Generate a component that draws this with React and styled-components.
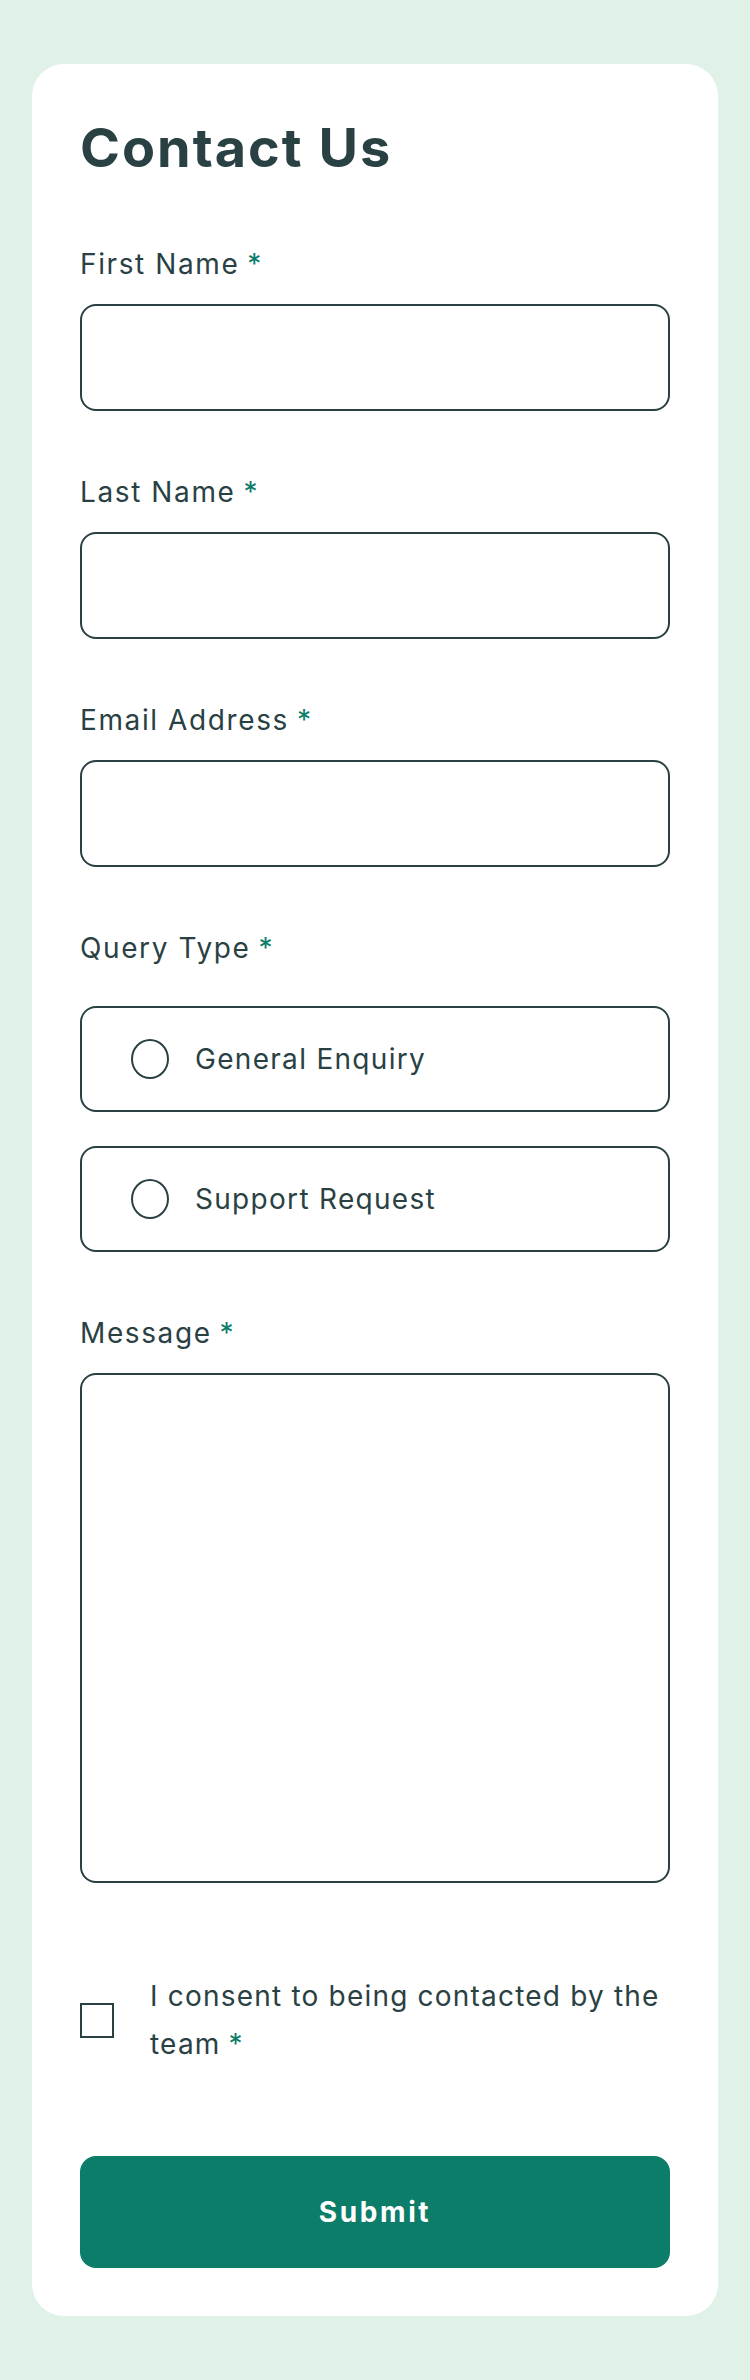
import { createGlobalStyle, styled } from 'styled-components';

const GlobalStyle = createGlobalStyle`
    html, body {
        margin: 0;
        padding: 0;
        background: #e0f1e8;
    }
    body {
        font-family: Inter, "Noto Sans", sans-serif;
        color: #2a4144;
    }
    * {
        box-sizing: border-box;
    }
`

const Page = styled.main`
    padding: 64px 32px;
`

const Card = styled.form`
    width: 686px;
    background: #ffffff;
    border-radius: 32px;
    padding: 48px;
    display: flex;
    flex-direction: column;
`

const Title = styled.h1`
    margin: 0 0 56px;
    font-size: 54px;
    line-height: 72px;
    font-weight: 700;
    letter-spacing: 2px;
`

const Fields = styled.div`
    display: flex;
    flex-direction: column;
    gap: 57px;
`

const Field = styled.div`
    display: flex;
    flex-direction: column;
    gap: ${(p) => p.$gap || 16}px;
`

const Label = styled.label`
    font-size: 28px;
    line-height: 48px;
    font-weight: 400;
    letter-spacing: 1.6px;
`

const Star = styled.span`
    color: #0c7d69;
    margin-left: 8px;
`

const Input = styled.input`
    display: block;
    width: 100%;
    height: 107px;
    border: 2px solid #2a4144;
    border-radius: 16px;
    background: #fff;
    font: inherit;
    padding: 0 24px;
    outline: none;
`

const TextArea = styled.textarea`
    display: block;
    width: 100%;
    height: 510px;
    border: 2px solid #2a4144;
    border-radius: 16px;
    background: #fff;
    font: inherit;
    padding: 24px;
    resize: none;
    outline: none;
`

const RadioGroup = styled.div`
    display: flex;
    flex-direction: column;
    gap: 34px;
`

const RadioBox = styled.label`
    display: flex;
    align-items: center;
    gap: 26px;
    height: 106px;
    padding-left: 49px;
    border: 2px solid #2a4144;
    border-radius: 16px;
    font-size: 28px;
    letter-spacing: 1.3px;
    cursor: pointer;
`

const RadioDot = styled.span`
    width: 38px;
    height: 40px;
    border: 2px solid #2a4144;
    border-radius: 50%;
    flex-shrink: 0;
`

const Consent = styled.label`
    display: flex;
    align-items: center;
    gap: 36px;
    margin-top: 89px;
    font-size: 28px;
    line-height: 48px;
    letter-spacing: 1.2px;
    cursor: pointer;
`

const CheckBox = styled.span`
    width: 34px;
    height: 35px;
    border: 2px solid #2a4144;
    flex-shrink: 0;
`

const ConsentText = styled.span`
    flex: 1;
`

const NoWrap = styled.span`
    white-space: nowrap;
`

const Submit = styled.button`
    margin-top: 88px;
    height: 112px;
    border: none;
    border-radius: 16px;
    background: #0c7d69;
    color: #fff;
    font-family: Inter, "Noto Sans", sans-serif;
    font-size: 28px;
    font-weight: 700;
    letter-spacing: 2.6px;
    cursor: pointer;
`

const fields = [
    { id: 'first', label: 'First Name' },
    { id: 'last', label: 'Last Name' },
    { id: 'email', label: 'Email Address' },
];

export default function App() {
    return (
        <Page>
            <GlobalStyle />
            <Card onSubmit={(e) => e.preventDefault()}>
                <Title>Contact Us</Title>
                <Fields>
                    {fields.map((f) => (
                        <Field key={f.id}>
                            <Label htmlFor={f.id}>{f.label}<Star>*</Star></Label>
                            <Input id={f.id} />
                        </Field>
                    ))}
                    <Field $gap={34}>
                        <Label>Query Type<Star>*</Star></Label>
                        <RadioGroup>
                            <RadioBox><RadioDot />General Enquiry</RadioBox>
                            <RadioBox><RadioDot />Support Request</RadioBox>
                        </RadioGroup>
                    </Field>
                    <Field>
                        <Label htmlFor="message">Message<Star>*</Star></Label>
                        <TextArea id="message" />
                    </Field>
                </Fields>
                <Consent>
                    <CheckBox />
                    <ConsentText>
                        I consent to being contacted by the <NoWrap>team<Star>*</Star></NoWrap>
                    </ConsentText>
                </Consent>
                <Submit type="submit">Submit</Submit>
            </Card>
        </Page>
    )
}
